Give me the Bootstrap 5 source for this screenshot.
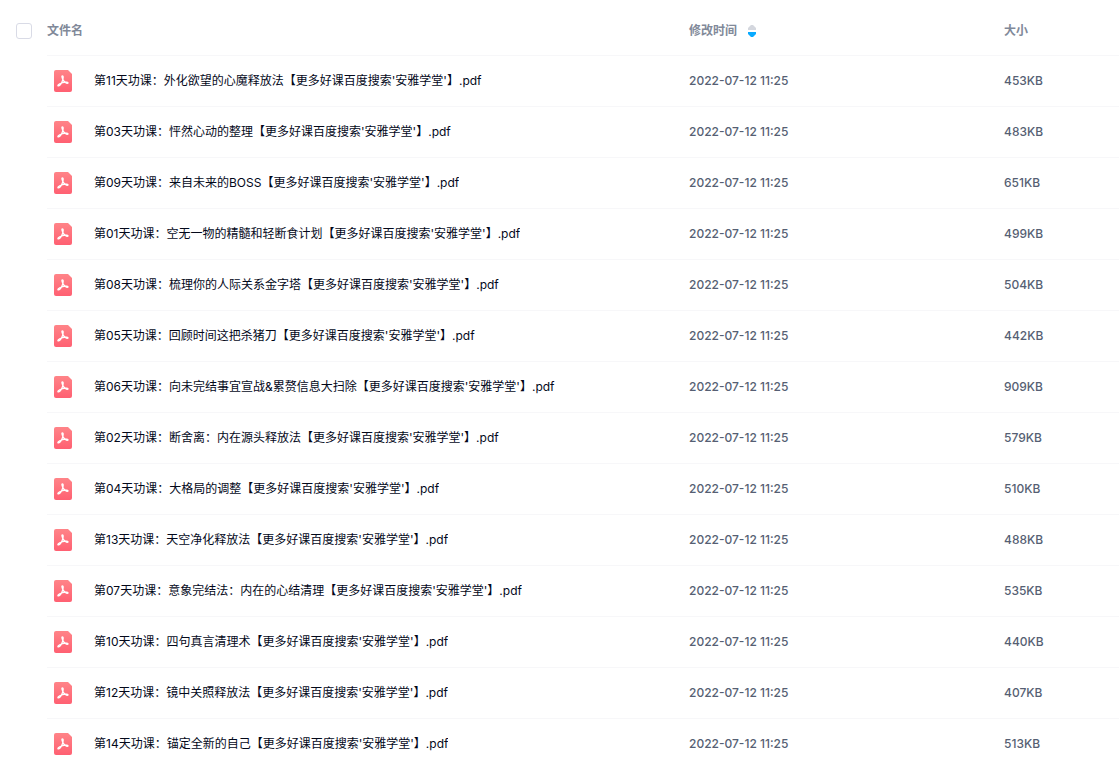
<!DOCTYPE html>
<html lang="zh-CN">
<head>
<meta charset="utf-8">
<meta name="viewport" content="width=device-width, initial-scale=1">
<title>文件列表</title>
<link rel="stylesheet" href="https://cdn.jsdelivr.net/npm/bootstrap@5.3.0/dist/css/bootstrap.min.css">
<style>
body{font-family:Inter,"Noto Sans CJK SC",sans-serif;font-size:12px;line-height:18px;color:#03081a}
.file-table{--bs-table-bg:transparent;table-layout:fixed;font-size:12px}
.file-table>:not(caption)>*>*{height:51px;padding:0;border-bottom:1px solid #f7f7f9}
.file-table>thead>tr>*{height:55px;padding-top:8px;vertical-align:middle;color:#818999;font-weight:700}
.file-table>:not(caption)>*>.col-check{width:47px;border-bottom:0;padding:6px 0 0 16px}
.col-time{width:315px}
.col-size{width:115px}
.file-table tbody td{color:#565f73;font-weight:500}
.file-table .form-check-input{display:block;width:16px;height:16px;margin:0;border-color:#d9dbe6}
.file-table .file-link{color:#03081a;font-weight:400;margin-left:15px}
.pdf-icon{width:32px;height:24px;flex:none}
.sort-btn{line-height:18px;color:inherit;font-weight:inherit}
</style>
<script src="https://cdn.jsdelivr.net/npm/bootstrap@5.3.0/dist/js/bootstrap.bundle.min.js"></script>
</head>
<body>
<svg width="0" height="0" class="position-absolute" aria-hidden="true">
<defs>
<linearGradient id="pdf-red" x1="0" y1="0" x2="0" y2="1"><stop offset="0" stop-color="#ff8488"/><stop offset="1" stop-color="#ff6072"/></linearGradient>
<symbol id="pdf" viewBox="0 0 32 24">
<path fill="url(#pdf-red)" d="M9 1h12l4 4v16a2 2 0 0 1-2 2H9a2 2 0 0 1-2-2V3a2 2 0 0 1 2-2z"/>
<path fill="none" stroke="#fff" stroke-width="1.200" stroke-linecap="round" stroke-linejoin="round" d="M15.300 6.800c1.500 0 .8 2.900.2 4.700-.7 2.200-2.300 5-4 5.500-1.100.2-.7-1.300.7-2 2.300-1.300 5.500-2.100 7.700-1.900 1.700.2 1.400 1.500.1 1.200-2-.5-3.600-2.300-4.400-4.200-.6-1.500-1.100-3.300-.3-3.300z"/>
</symbol>
</defs>
</svg>
<main>
<table class="table file-table align-middle w-100 mb-0">
<thead>
<tr>
<th class="col-check"><input class="form-check-input" type="checkbox" id="select-all" aria-label="全选"></th>
<th scope="col"><label for="select-all">文件名</label></th>
<th scope="col" class="col-time"><button type="button" class="sort-btn border-0 bg-transparent p-0 d-flex align-items-center">修改时间<svg class="ms-2" width="14" height="12" viewBox="0 0 14 12" aria-hidden="true"><path fill="#d4d7de" d="M3 5V3l3-3h2l3 3v2z"/><path fill="#09aaff" d="M3 7h8v2l-3 3H6L3 9z"/></svg></button></th>
<th scope="col" class="col-size">大小</th>
</tr>
</thead>
<tbody id="files"></tbody>
</table>
</main>
<script>
const files = [
["第11天功课：外化欲望的心魔释放法","453KB"],
["第03天功课：怦然心动的整理","483KB"],
["第09天功课：来自未来的BOSS","651KB"],
["第01天功课：空无一物的精髓和轻断食计划","499KB"],
["第08天功课：梳理你的人际关系金字塔","504KB"],
["第05天功课：回顾时间这把杀猪刀","442KB"],
["第06天功课：向未完结事宜宣战&amp;累赘信息大扫除","909KB"],
["第02天功课：断舍离：内在源头释放法","579KB"],
["第04天功课：大格局的调整","510KB"],
["第13天功课：天空净化释放法","488KB"],
["第07天功课：意象完结法：内在的心结清理","535KB"],
["第10天功课：四句真言清理术","440KB"],
["第12天功课：镜中关照释放法","407KB"],
["第14天功课：锚定全新的自己","513KB"]
];
document.getElementById("files").innerHTML = files.map(([name, size]) => `
<tr>
<td class="col-check"></td>
<td><div class="d-flex align-items-center"><svg class="pdf-icon" aria-hidden="true"><use href="#pdf"/></svg><a href="#" class="file-link text-decoration-none text-truncate">${name}【更多好课百度搜索'安雅学堂'】.pdf</a></div></td>
<td>2022-07-12 11:25</td>
<td>${size}</td>
</tr>`).join("");
</script>
</body>
</html>
